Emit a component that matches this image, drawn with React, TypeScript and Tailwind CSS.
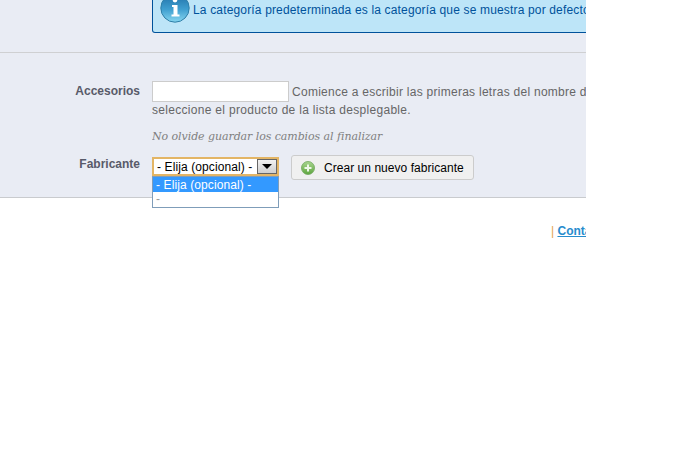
import React from "react";

function Info() {
  return (
    <svg width="30" height="30" viewBox="0 0 30 30" className="shrink-0">
      <defs>
        <linearGradient id="ig" x1="0" y1="0" x2="0" y2="1">
          <stop offset="0" stopColor="#1f6fa6" />
          <stop offset="0.55" stopColor="#3f9fd0" />
          <stop offset="1" stopColor="#86d6f0" />
        </linearGradient>
      </defs>
      <circle cx="15" cy="15" r="14.2" fill="url(#ig)" stroke="#2f7fa8" strokeWidth="1" />
      <circle cx="15" cy="7" r="2.4" fill="#fff" />
      <path d="M12 12h5.5v9.5H19.5V23.5h-8v-2h2V14h-1.5z" fill="#fff" />
    </svg>
  );
}

function Plus() {
  return (
    <svg width="14" height="14" viewBox="0 0 14 14" className="shrink-0">
      <defs>
        <linearGradient id="pg" x1="0" y1="0" x2="0" y2="1">
          <stop offset="0" stopColor="#a9d58f" />
          <stop offset="1" stopColor="#5ea63f" />
        </linearGradient>
      </defs>
      <circle cx="7" cy="7" r="6.5" fill="url(#pg)" stroke="#6fa65a" strokeWidth="0.8" />
      <path d="M6 3.5h2V6h2.5v2H8v2.5H6V8H3.5V6H6z" fill="#eef7e8" />
    </svg>
  );
}

export default function App() {
  return (
    <div className="w-[674px] h-[473px] bg-white overflow-hidden font-['Liberation_Sans',Arial,sans-serif] text-[12px]">
      <div className="w-[586px] h-[473px] overflow-hidden">
        <div className="h-[198px] bg-[#e9ecf4] border-b border-[#c9cbce] flex flex-col">
          <div className="h-[53px] shrink-0 border-b border-[#cfd0d2] pl-[152px] overflow-hidden">
            <div className="w-[600px] h-[33px] bg-[#bde5f8] border border-t-0 border-[#00529b] rounded-b-[3px] flex items-start pl-[7px]">
              <div className="-mt-[7px] flex items-start gap-[3px]">
                <Info />
                <span className="text-[#00529b] whitespace-nowrap mt-[10px] leading-[14px] tracking-[0.16px]">
                  La categoría predeterminada es la categoría que se muestra por defecto
                </span>
              </div>
            </div>
          </div>
          <div className="flex pt-[28px]">
            <div className="w-[140px] shrink-0 text-right font-bold text-[#585a69] leading-[18px] pt-[1px]">Accesorios</div>
            <div className="ml-[12px] flex-1 min-w-0 overflow-hidden">
              <div className="flex items-start h-[21px]">
                <div className="w-[137px] h-[21px] shrink-0 bg-white border border-[#cccccc]" />
                <span className="ml-[3px] mt-[3px] text-[#666666] whitespace-nowrap leading-[17px] tracking-[0.27px]">
                  Comience a escribir las primeras letras del nombre del producto y
                </span>
              </div>
              <div className="text-[#666666] leading-[17px] tracking-[0.3px]">seleccione el producto de la lista desplegable.</div>
              <div className="mt-[11px] text-[#7f7f7f] italic leading-[14px] text-[11px] tracking-[-0.07px] font-['DejaVu_Serif',serif]">
                No olvide guardar los cambios al finalizar
              </div>
            </div>
          </div>
          <div className="flex mt-[13px]">
            <div className="w-[140px] shrink-0 text-right font-bold text-[#585a69] leading-[18px] -mt-[2px]">Fabricante</div>
            <div className="ml-[12px] flex items-start">
              <div className="relative w-[127px] h-[19px]">
                <div className="h-[19px] border-2 border-[#e3b565] bg-white flex items-center justify-between pl-[3px] text-black whitespace-nowrap tracking-[0.1px]">
                  <span>- Elija (opcional) -</span>
                  <span className="w-[20px] h-[15px] bg-gradient-to-b from-[#f2f2f2] to-[#cfcfcf] border border-[#666666] flex items-center justify-center">
                    <span className="w-0 h-0 border-x-[5px] border-x-transparent border-t-[5px] border-t-black" />
                  </span>
                </div>
                <div className="absolute left-0 top-[19px] w-[127px] h-[32px] bg-white border border-[#7f9db9] z-10">
                  <div className="h-[15px] bg-[#3399ff] text-white pl-[3px] pt-[1px] leading-[15px] whitespace-nowrap tracking-[0.1px]">- Elija (opcional) -</div>
                  <div className="pl-[3px] text-[#9a9a9a] leading-[15px]">-</div>
                </div>
              </div>
              <button className="ml-[12px] -mt-[2px] w-[183px] h-[25px] bg-[#f0f0f0] border border-[#cccccc] rounded-[3px] flex items-center pl-[9px] gap-[9px] text-black whitespace-nowrap tracking-[0.04px]">
                <Plus />
                <span>Crear un nuevo fabricante</span>
              </button>
            </div>
          </div>
        </div>
        <div className="whitespace-nowrap pt-[26px] leading-[14px] pl-[551px]">
          <span className="text-[#e5a54f]">|</span>{" "}
          <span className="font-bold underline text-[#268ccd]">Contacto</span>
        </div>
      </div>
    </div>
  );
}
